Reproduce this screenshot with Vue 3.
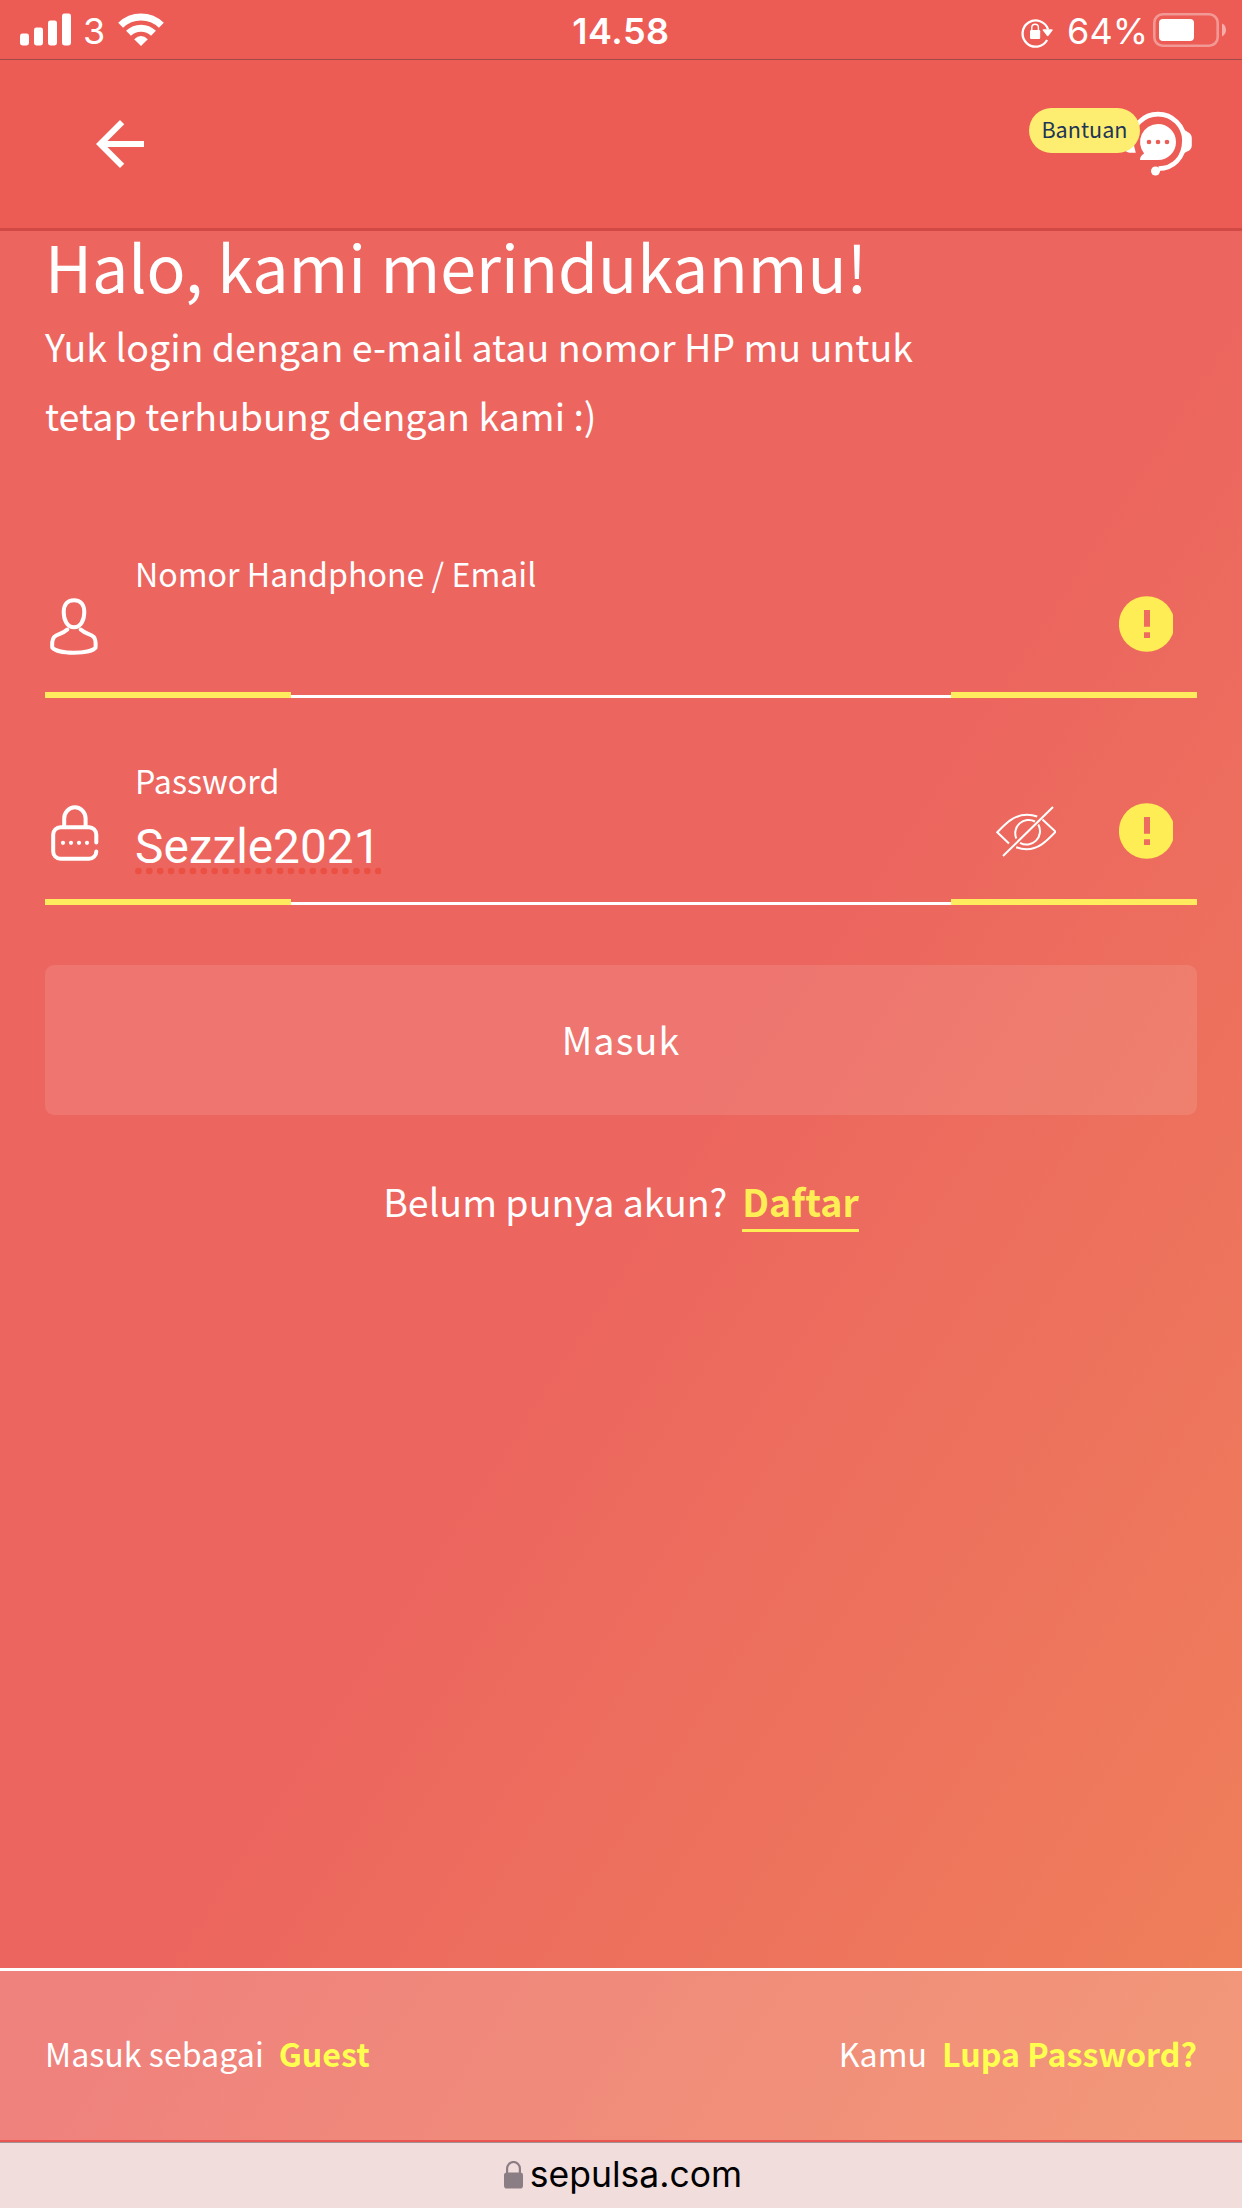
<script setup>
import { ref } from 'vue'

const fields = ref([
  { id: 'user', label: 'Nomor Handphone / Email', value: '' },
  { id: 'password', label: 'Password', value: 'Sezzle2021' },
])
</script>

<template>
  <div class="screen">
    <div class="status">
      <div class="status-left">
        <svg width="52" height="34" viewBox="0 0 52 34" fill="#fff">
          <rect x="0" y="20.5" width="9" height="12" rx="2.4" />
          <rect x="14" y="14.5" width="9" height="18" rx="2.4" />
          <rect x="28" y="7.5" width="9" height="25" rx="2.4" />
          <rect x="42" y="0.5" width="9" height="32" rx="2.4" />
        </svg>
        <span class="carrier">3</span>
        <svg class="wifi" width="46" height="34" viewBox="0 0 46 34" fill="none" stroke="#fff">
          <path d="M2.6 12.2a29.2 29.2 0 0 1 40.8 0" stroke-width="7" />
          <path d="M10.5 20.3a18 18 0 0 1 25 0" stroke-width="7" />
          <path d="M16.2 26.2q6.8-6.2 13.6 0L23 33z" fill="#fff" stroke="none" />
        </svg>
      </div>
      <span class="clock">14.58</span>
      <div class="status-right">
        <svg width="32" height="32" viewBox="0 0 32 32" fill="none">
          <path d="M26.1 24A13.1 13.1 0 1 1 27.1 13.4" stroke="#fff" stroke-width="2.3" />
          <path d="M22.4 13.2h8.4c.9 0 1.2.8.7 1.4l-4 5.2c-.5.6-1.2.6-1.6 0l-4-5.2c-.5-.6-.3-1.4.5-1.4z" fill="#fff" />
          <rect x="9" y="14" width="10.2" height="9" rx="1.2" fill="#fff" />
          <path d="M10.8 15v-3.4a3.3 3.3 0 0 1 6.6 0V15" stroke="#fff" stroke-width="1.4" />
        </svg>
        <span class="percent">64%</span>
        <svg class="battery" width="74" height="34" viewBox="0 0 74 34" fill="none">
          <rect x="1.3" y="1.3" width="63.4" height="31.4" rx="8.5" stroke="#fff" stroke-opacity=".38" stroke-width="2.6" />
          <rect x="6" y="6" width="35" height="22" rx="4" fill="#fff" />
          <path d="M69 10.6c5.3 2 5.3 10.8 0 12.8z" fill="#fff" fill-opacity=".5" />
        </svg>
      </div>
    </div>

    <header class="appbar">
      <button class="back" aria-label="Kembali">
        <svg width="72" height="72" viewBox="0 0 24 24" fill="#fff">
          <path d="M20 11H7.83l5.59-5.59L12 4l-8 8 8 8 1.41-1.41L7.83 13H20v-2z" />
        </svg>
      </button>
      <div class="help">
        <span class="help-badge">Bantuan</span>
        <svg class="headset" width="72" height="66" viewBox="1122 111 72 66" fill="none">
          <path d="M1131.6 140.5A26.4 26.4 0 0 1 1184.4 140.5C1184.4 158 1173 168.600 1158.5 168.6" stroke="#fff" stroke-width="4.6" />
          <path d="M1184 130.5q1.6-.5 3.2 1.2c3.3 1.2 4.6 3.8 4.6 6.3v7.5c0 3-1.9 5.3-4.8 6.1l-3.5 2z" fill="#fff" />
          <path d="M1132 131c-5 1-8 4-8 8v6.5c0 5 2.8 7.2 5.800 7.200h6l-1.500-6z" fill="#fff" />
          <path d="M1158 124a18 18 0 0 1 0 36h-18c0-2.8 1.4-5.4 4.1-6.6A18 18 0 0 1 1158 124z" fill="#fff" />
          <g fill="#ec5b54">
            <circle cx="1149" cy="142" r="2.3" />
            <circle cx="1158" cy="142" r="2.3" />
            <circle cx="1167" cy="142" r="2.3" />
          </g>
          <circle cx="1155.5" cy="171" r="4.5" fill="#fff" />
        </svg>
      </div>
    </header>

    <main class="content">
      <h1>Halo, kami merindukanmu!</h1>
      <p class="lead">Yuk login dengan e-mail atau nomor HP mu untuk<br />tetap terhubung dengan kami :)</p>

      <label v-for="field in fields" :key="field.id" class="field">
        <span class="field-icon">
          <svg v-if="field.id === 'user'" width="48" height="57" viewBox="0 0 48 57" fill="none" stroke="#fff" stroke-width="4" stroke-linecap="round">
            <path d="M24 2.3c7 0 10.3 5 10.3 11.7C34.3 22.5 30.5 29.3 24 29.3S13.7 22.5 13.7 14C13.7 7.3 17 2.3 24 2.3z" />
            <path d="M17.3 31.5C12.5 36 7.5 35.5 4.3 38.8 2.3 41.2 2 46 2.3 49.5 5 53 15 54.7 24 54.7S43 53 45.5 49.8C45.8 46 45.7 41.2 43.7 38.8 40.5 35.5 35.5 36 30.7 31.5" />
          </svg>
          <svg v-else class="lock" width="48" height="57" viewBox="0 0 48 57" fill="none" stroke="#fff" stroke-width="4" stroke-linecap="round">
            <path d="M13.2 21V13.6a10.7 11.3 0 0 1 21.4 0V21" stroke-linecap="butt" />
            <path d="M45.3 37.5V29.5a7.3 7.3 0 0 0-7.3-7.3H9.5A7.3 7.3 0 0 0 2.2 29.5V46.5A7.3 7.3 0 0 0 9.5 53.8H38A7.3 7.3 0 0 0 45.3 46.5" />
            <g fill="#fff" stroke="none">
              <circle cx="12" cy="37.8" r="2.1" />
              <circle cx="20" cy="37.8" r="2.1" />
              <circle cx="28" cy="37.8" r="2.1" />
              <circle cx="36" cy="37.8" r="2.1" />
            </g>
          </svg>
        </span>
        <span class="field-body">
          <span class="field-label">{{ field.label }}</span>
          <span v-if="field.value" class="field-value">
            {{ field.value }}
            <svg class="misspelt" width="246" height="8" viewBox="0 0 246 8">
              <circle v-for="n in 23" :key="n" :cx="3.4 + (n - 1) * 10.9" cy="4" r="3.3" fill="#ec5042" />
            </svg>
          </span>
        </span>
        <svg v-if="field.id === 'password'" class="eye" width="60" height="52" viewBox="0 0 60 52" fill="none" stroke="#fff" stroke-width="2">
          <path d="M13 38.5L1.3 27.3C10 18 18 9.8 31 9.8q5.5 0 10.2 1.7M46.5 14.6L59.6 26.8C50 37 42 44.3 30.5 44.3q-5 0-10.3-2" />
          <path d="M20.3 33.5A13.4 13.4 0 0 1 39 16.5M42.3 19.6A13.4 13.4 0 0 1 24 37.8" />
          <path d="M7 51L57 2" />
        </svg>
        <svg class="alert" width="54" height="56" viewBox="0 0 54 56">
          <circle cx="27.7" cy="28" r="27.8" fill="#feed54" />
          <path d="M25 14h6v16.7h-6zM25 36.3h6V42h-6z" fill="#ee6c5f" />
        </svg>
      </label>

      <button class="submit">Masuk</button>
      <p class="signup">Belum punya akun?<a class="signup-link">Daftar</a></p>
    </main>

    <footer class="links">
      <span>Masuk sebagai<b>Guest</b></span>
      <span>Kamu<b>Lupa Password?</b></span>
    </footer>

    <div class="urlbar">
      <svg width="19" height="28" viewBox="0 0 19 28">
        <rect y="11.5" width="19" height="16" rx="2.8" fill="#8a7e84" />
        <path d="M3.1 12.5V7.6a6.4 6.6 0 0 1 12.8 0v4.9" fill="none" stroke="#8a7e84" stroke-width="2.2" />
      </svg>
      <span>sepulsa.com</span>
    </div>
  </div>
</template>

<style>
body {
  margin: 0;
}
</style>

<style scoped>
.screen {
  display: flex;
  flex-direction: column;
  width: 1242px;
  height: 2208px;
  overflow: hidden;
  color: #fff;
  font-family: "Noto Sans CJK SC", sans-serif;
  background: linear-gradient(to bottom right, #ec655f 0%, #ec655f 50%, #ef815a 100%) 0 231px / 1242px 1910px no-repeat;
}

button {
  padding: 0;
  border: 0;
  background: none;
  color: inherit;
  font: inherit;
}

.status {
  display: grid;
  grid-template-columns: 1fr auto 1fr;
  box-sizing: border-box;
  height: 60px;
  padding: 0 15px 0 20px;
  border-bottom: 1px solid #9c4b49;
  background: #ec5b54;
  font: 36px/62px Inter, sans-serif;
}

.status-left,
.status-right {
  display: flex;
  align-items: flex-start;
}

.status-left > svg,
.battery {
  margin-top: 13px;
}

.status-right {
  justify-content: flex-end;
}

.status-right > svg:first-child {
  margin-top: 16px;
}

.carrier {
  margin-left: 11px;
}

.wifi {
  margin-left: 13px;
}

.clock {
  margin: 0 2.5px 0 -2.5px;
  font-weight: 600;
  letter-spacing: 0.5px;
}

.percent {
  margin: 0 5px 0 14px;
}

.appbar {
  display: flex;
  justify-content: space-between;
  box-sizing: border-box;
  height: 171px;
  padding: 48px 48px 0 84px;
  border-bottom: 3px solid #d24a45;
  background: #ec5b54;
}

.back {
  width: 72px;
  height: 72px;
}

.help {
  display: flex;
  align-items: flex-start;
}

.help-badge {
  position: relative;
  z-index: 1;
  box-sizing: border-box;
  width: 111px;
  height: 45px;
  margin-right: -18px;
  border-radius: 23px;
  background: #fdee72;
  color: #1f3556;
  font-size: 21.6px;
  line-height: 42px;
  text-align: center;
}

.headset {
  margin-top: 3px;
}

.content {
  flex: none;
  box-sizing: border-box;
  height: 1737px;
  padding: 0 45px;
}

h1 {
  margin: 0;
  font-size: 64.5px;
  font-weight: 400;
  line-height: 68px;
}

.lead {
  margin: 12px 0 101px;
  font-size: 37.6px;
  line-height: 69px;
}

.field {
  display: flex;
  align-items: center;
  height: 148px;
  margin-bottom: 59px;
  padding-right: 24px;
  background:
    linear-gradient(#feeb5e, #feeb5e) left bottom / 246px 6px no-repeat,
    linear-gradient(#feeb5e, #feeb5e) right bottom / 246px 6px no-repeat,
    linear-gradient(#fff, #fff) left bottom / 100% 3px no-repeat;
}

.field-icon {
  box-sizing: border-box;
  width: 90px;
  padding: 4px 0 0 5px;
  line-height: 0;
}

.lock {
  margin: 1px 0 0 1px;
}

.field-body {
  display: flex;
  flex: 1;
  flex-direction: column;
  height: 100%;
}

.field-label {
  font-size: 32.2px;
  line-height: 46px;
}

.field-value {
  position: relative;
  font: 47.8px/89px Roboto, sans-serif;
}

.misspelt {
  position: absolute;
  left: 0;
  top: 64px;
}

.eye {
  margin-right: 63px;
}

.submit {
  display: block;
  width: 100%;
  height: 150px;
  margin-top: 60px;
  padding-bottom: 3px;
  border-radius: 9px;
  background: rgba(255, 255, 255, 0.11);
  font-size: 37.7px;
  letter-spacing: 1.1px;
}

.signup {
  display: flex;
  justify-content: center;
  margin: 57px 0 0;
  font-size: 37.6px;
  line-height: 57px;
}

.signup-link {
  height: 57px;
  margin-left: 15px;
  border-bottom: 3px solid #feee56;
  color: #feee56;
  font-weight: 700;
}

.links {
  display: flex;
  justify-content: space-between;
  box-sizing: border-box;
  height: 174px;
  padding: 0 45px;
  border-top: 3px solid #fff;
  border-bottom: 2px solid #e95550;
  background: rgba(255, 255, 255, 0.19);
  background-clip: padding-box;
  font-size: 32.2px;
  line-height: 165px;
}

.links b {
  margin-left: 15px;
  color: #ffff50;
}

.urlbar {
  display: flex;
  justify-content: center;
  box-sizing: border-box;
  flex: 1;
  padding: 18px 0 0 4px;
  border-top: 1px solid #a48f92;
  background: #f2dddd;
  color: #000;
  font: 35.5px/28px Inter, sans-serif;
}

.urlbar span {
  margin-left: 7px;
}
</style>
